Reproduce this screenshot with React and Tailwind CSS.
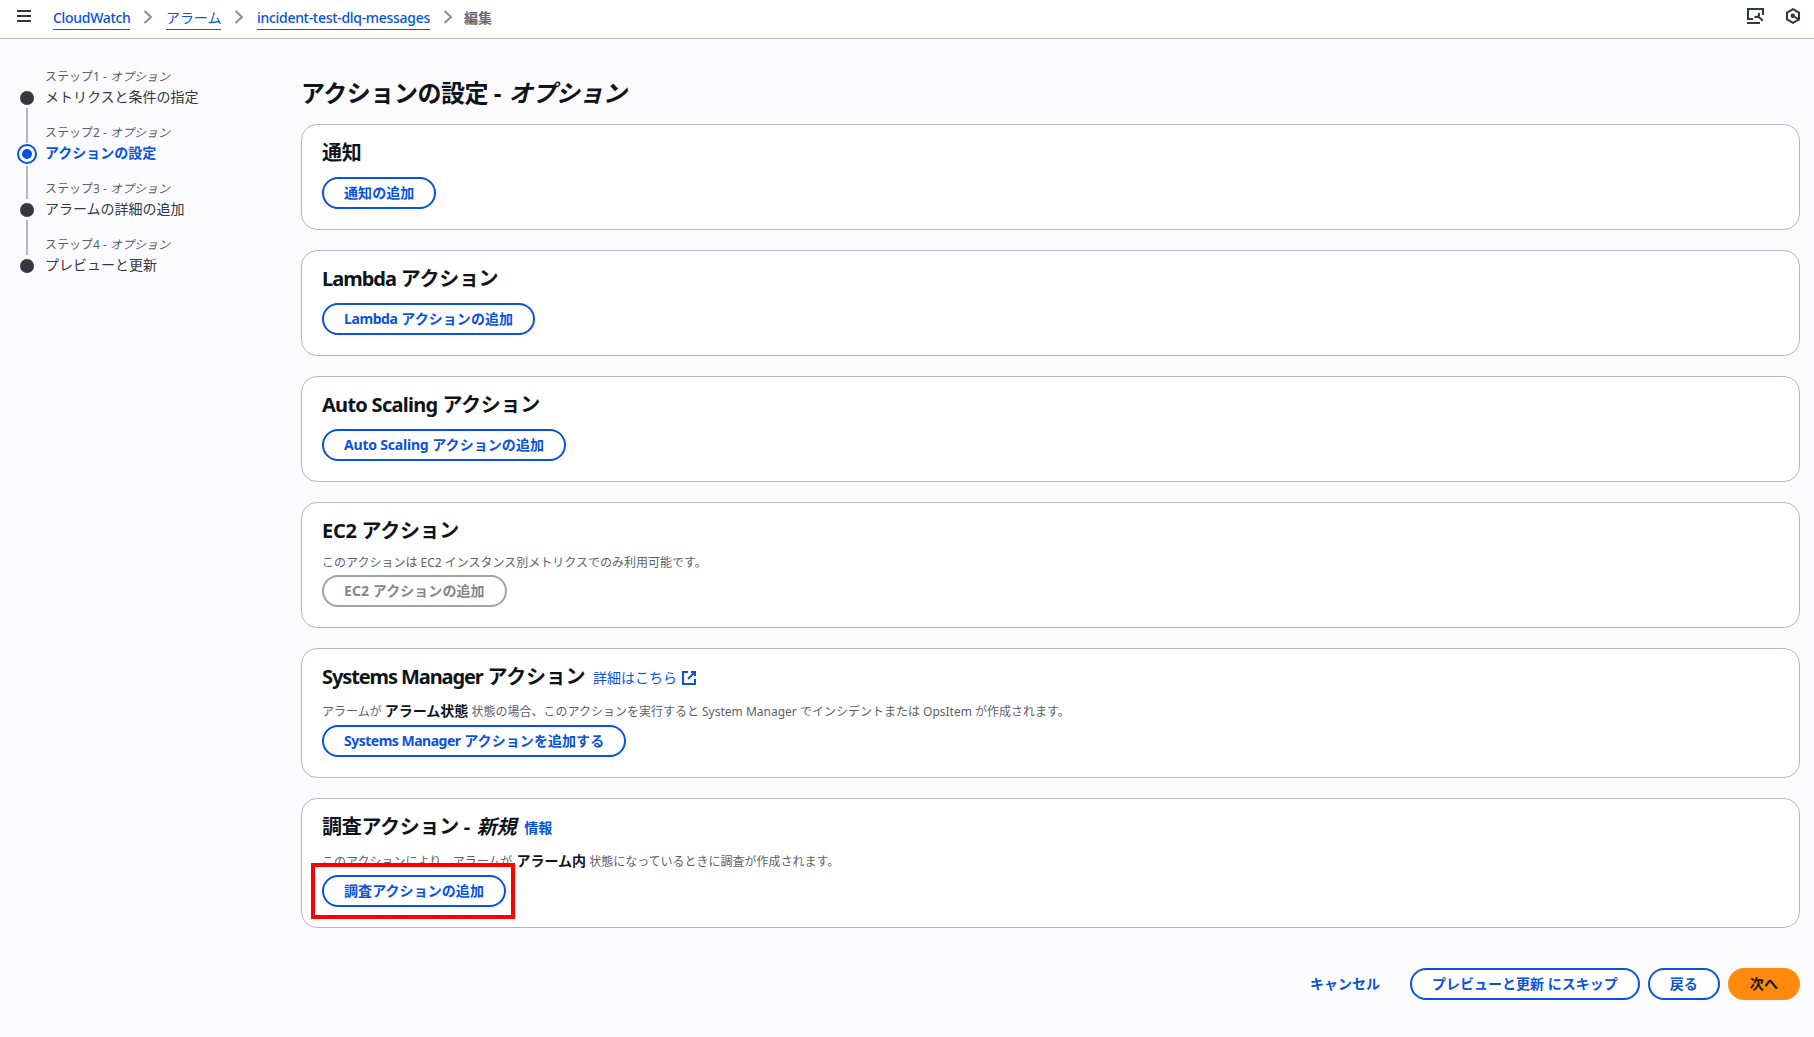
const crumbs = [
  { label: 'CloudWatch', style: 'w-[77px] font-medium tracking-[-0.3px]' },
  { label: 'アラーム', style: 'w-[55px]' },
  { label: 'incident-test-dlq-messages', style: 'w-[173px] font-medium tracking-[-0.3px]' },
];

const steps = [
  { n: 1, title: 'メトリクスと条件の指定' },
  { n: 2, title: 'アクションの設定', active: true },
  { n: 3, title: 'アラームの詳細の追加' },
  { n: 4, title: 'プレビューと更新' },
];

const Chevron = () => (
  <svg className="mx-3 h-4 w-3 shrink-0" viewBox="0 0 12 16" fill="none" stroke="#8c8c94" strokeWidth="2">
    <path d="M2.5 3L9 9l-6.5 6" />
  </svg>
);

const MenuIcon = () => (
  <svg className="h-4 w-4" viewBox="0 0 16 16" stroke="#333843" strokeWidth="2">
    <path d="M1 3h14M1 8h14M1 13h14" />
  </svg>
);

const ScreenToolIcon = () => (
  <svg className="h-[18px] w-[18px]" viewBox="0 0 18 18" fill="none" stroke="#333843" strokeWidth="2">
    <path d="M7 12H2V2h15v6" />
    <path d="M1 16h13" />
    <path d="M8.5 10h2.5l2-1.5V6M12 9.3l4.8 4.5" />
  </svg>
);

const HexIcon = () => (
  <svg className="h-4 w-4" viewBox="0 0 16 16" fill="none" stroke="#333843" strokeWidth="2">
    <path d="M8 1.2l6 3.4v6.8l-6 3.4-6-3.4V4.6z" />
    <circle cx="7.8" cy="7.8" r="2.2" fill="#333843" stroke="none" />
    <path d="M8 8l5.5 3.2" />
  </svg>
);

const ExternalIcon = () => (
  <svg className="h-4 w-4" viewBox="0 0 16 16" fill="none" stroke="#0952df" strokeWidth="2">
    <path d="M7 2H2v12h12V9" />
    <path d="M10 2h4v4M14 2L7 9" />
  </svg>
);

const Button = ({ children, disabled, primary }) => {
  let look = 'border-[#0952df] text-[#0952df] bg-white';
  if (disabled) look = 'border-[#a2a2ab] text-[#85858e] bg-white';
  if (primary) look = 'border-[#ff8a0d] text-[#0f141a] bg-[#ff8a0d]';
  return (
    <button
      className={`block h-8 shrink-0 whitespace-nowrap rounded-full border-2 px-5 pb-px text-sm leading-[26px] font-bold tracking-[0.07px] ${look}`}
    >
      {children}
    </button>
  );
};

const Card = ({ title, extra, description, height, children }) => (
  <section className={`rounded-2xl border border-[#b6b6c0] bg-white px-5 pt-[15px] ${height}`}>
    <div className="mb-[13px] flex h-6 items-center whitespace-nowrap">
      <h2 className="pt-0.5 text-xl leading-6 font-bold tracking-[-0.3px]">{title}</h2>
      {extra}
    </div>
    {description}
    {children}
  </section>
);

const Step = ({ n, title, active, last }) => (
  <li className="flex h-14">
    <div className="flex w-5 flex-col items-center">
      {active ? (
        <span className="mt-[19px] mb-[-1px] flex size-5 shrink-0 items-center justify-center rounded-full border-2 border-[#0952df]">
          <span className="size-2.5 rounded-full bg-[#0952df]" />
        </span>
      ) : (
        <span className="mt-[22px] size-3.5 shrink-0 rounded-full bg-[#333843]" />
      )}
      {!last && <span className="mt-[3px] -mb-[18px] w-0.5 flex-1 bg-[#b6b6c0]" />}
    </div>
    <div className="pl-2 whitespace-nowrap">
      <div className="h-[18px] text-xs leading-4 text-[#5c5f6b]">
        ステップ{n} - <i>オプション</i>
      </div>
      <div className={active ? 'text-sm leading-5 font-bold text-[#0952df]' : 'text-sm leading-5 text-[#333843]'}>
        {title}
      </div>
    </div>
  </li>
);

export default function App() {
  return (
    <div
      lang="ja"
      className="flex h-[1037px] w-[1814px] flex-col overflow-hidden bg-[#fbfbfd] font-['Noto_Sans','Noto_Sans_CJK_JP',sans-serif] text-[#0f141a]"
    >
      <header className="flex h-[39px] shrink-0 items-center border-b border-[#b6b6c0] bg-white pr-[13px] pb-1.5 pl-4">
        <MenuIcon />
        <nav className="ml-[21px] flex items-center text-sm">
          {crumbs.map((c) => (
            <div key={c.label} className="flex items-center">
              <a className={`mt-1 h-[23px] border-b border-[#0952df] leading-[22px] whitespace-nowrap text-[#0952df] ${c.style}`}>
                {c.label}
              </a>
              <Chevron />
            </div>
          ))}
          <span className="mt-1 -ml-0.5 h-[23px] leading-[22px] font-bold text-[#656871]">編集</span>
        </nav>
        <div className="ml-auto flex items-center gap-[21px]">
          <ScreenToolIcon />
          <HexIcon />
        </div>
      </header>

      <div className="flex">
        <ol className="w-[301px] shrink-0 pt-[30px] pl-[17px]">
          {steps.map((s, i) => (
            <Step key={s.n} {...s} last={i === steps.length - 1} />
          ))}
        </ol>

        <main className="w-[1499px] pt-[39px]">
          <h1 className="h-[46px] text-2xl leading-[30px] font-bold tracking-[-0.48px]">
            アクションの設定 - <i className="ml-0.5">オプション</i>
          </h1>

          <div className="flex flex-col gap-5">
            <Card title="通知" height="h-[106px]">
              <Button>通知の追加</Button>
            </Card>
            <Card
              title={
                <>
                  <span className="tracking-[-1px]">Lambda</span> アクション
                </>
              }
              height="h-[106px]"
            >
              <Button>
                <span className="tracking-[-0.4px]">Lambda</span> アクションの追加
              </Button>
            </Card>
            <Card
              title={
                <>
                  <span className="tracking-[-0.72px]">Auto Scaling</span> アクション
                </>
              }
              height="h-[106px]"
            >
              <Button>
                <span className="tracking-[-0.2px]">Auto Scaling</span> アクションの追加
              </Button>
            </Card>
            <Card
              title="EC2 アクション"
              height="h-[126px]"
              description={
                <p className="h-5 text-xs leading-[15px] text-[#5c5f6b]">
                  このアクションは EC2 インスタンス別メトリクスでのみ利用可能です。
                </p>
              }
            >
              <Button disabled>EC2 アクションの追加</Button>
            </Card>
            <Card
              title={
                <>
                  <span className="tracking-[-1.1px]">Systems Manager</span> アクション
                </>
              }
              height="h-[130px]"
              extra={
                <a className="mt-1 ml-2 flex items-center gap-1 text-sm text-[#0952df]">
                  詳細はこちら
                  <ExternalIcon />
                </a>
              }
              description={
                <p className="h-6 text-xs leading-5 text-[#5c5f6b]">
                  アラームが <b className="text-sm leading-5 text-[#0f141a]">アラーム状態</b>{' '}
                  状態の場合、このアクションを実行すると System Manager でインシデントまたは OpsItem が作成されます。
                </p>
              }
            >
              <Button>
                <span className="tracking-[-0.5px]">Systems Manager</span> アクションを追加する
              </Button>
            </Card>
            <Card
              title={
                <>
                  調査アクション - <i className="ml-0.5">新規</i>
                </>
              }
              height="h-[130px]"
              extra={<a className="mt-1 ml-2 text-sm font-bold text-[#0952df]">情報</a>}
              description={
                <p className="h-6 text-xs leading-5 text-[#5c5f6b]">
                  このアクションにより、アラームが{' '}
                  <b className="ml-px text-sm leading-5 text-[#0f141a]">アラーム内</b>{' '}
                  状態になっているときに調査が作成されます。
                </p>
              }
            >
              <div className="relative w-fit">
                <Button>調査アクションの追加</Button>
                {/* highlight frame */}
                <div className="absolute -top-3 -right-[9px] -bottom-3 -left-[11px] border-4 border-[#ff0000]" />
              </div>
            </Card>
          </div>

          <div className="mt-10 flex items-center justify-end gap-2">
            <a className="mr-[22px] text-sm font-bold text-[#0952df]">キャンセル</a>
            <Button>
              <span className="tracking-normal">プレビューと更新 にスキップ</span>
            </Button>
            <Button>戻る</Button>
            <Button primary>次へ</Button>
          </div>
        </main>
      </div>
    </div>
  );
}
